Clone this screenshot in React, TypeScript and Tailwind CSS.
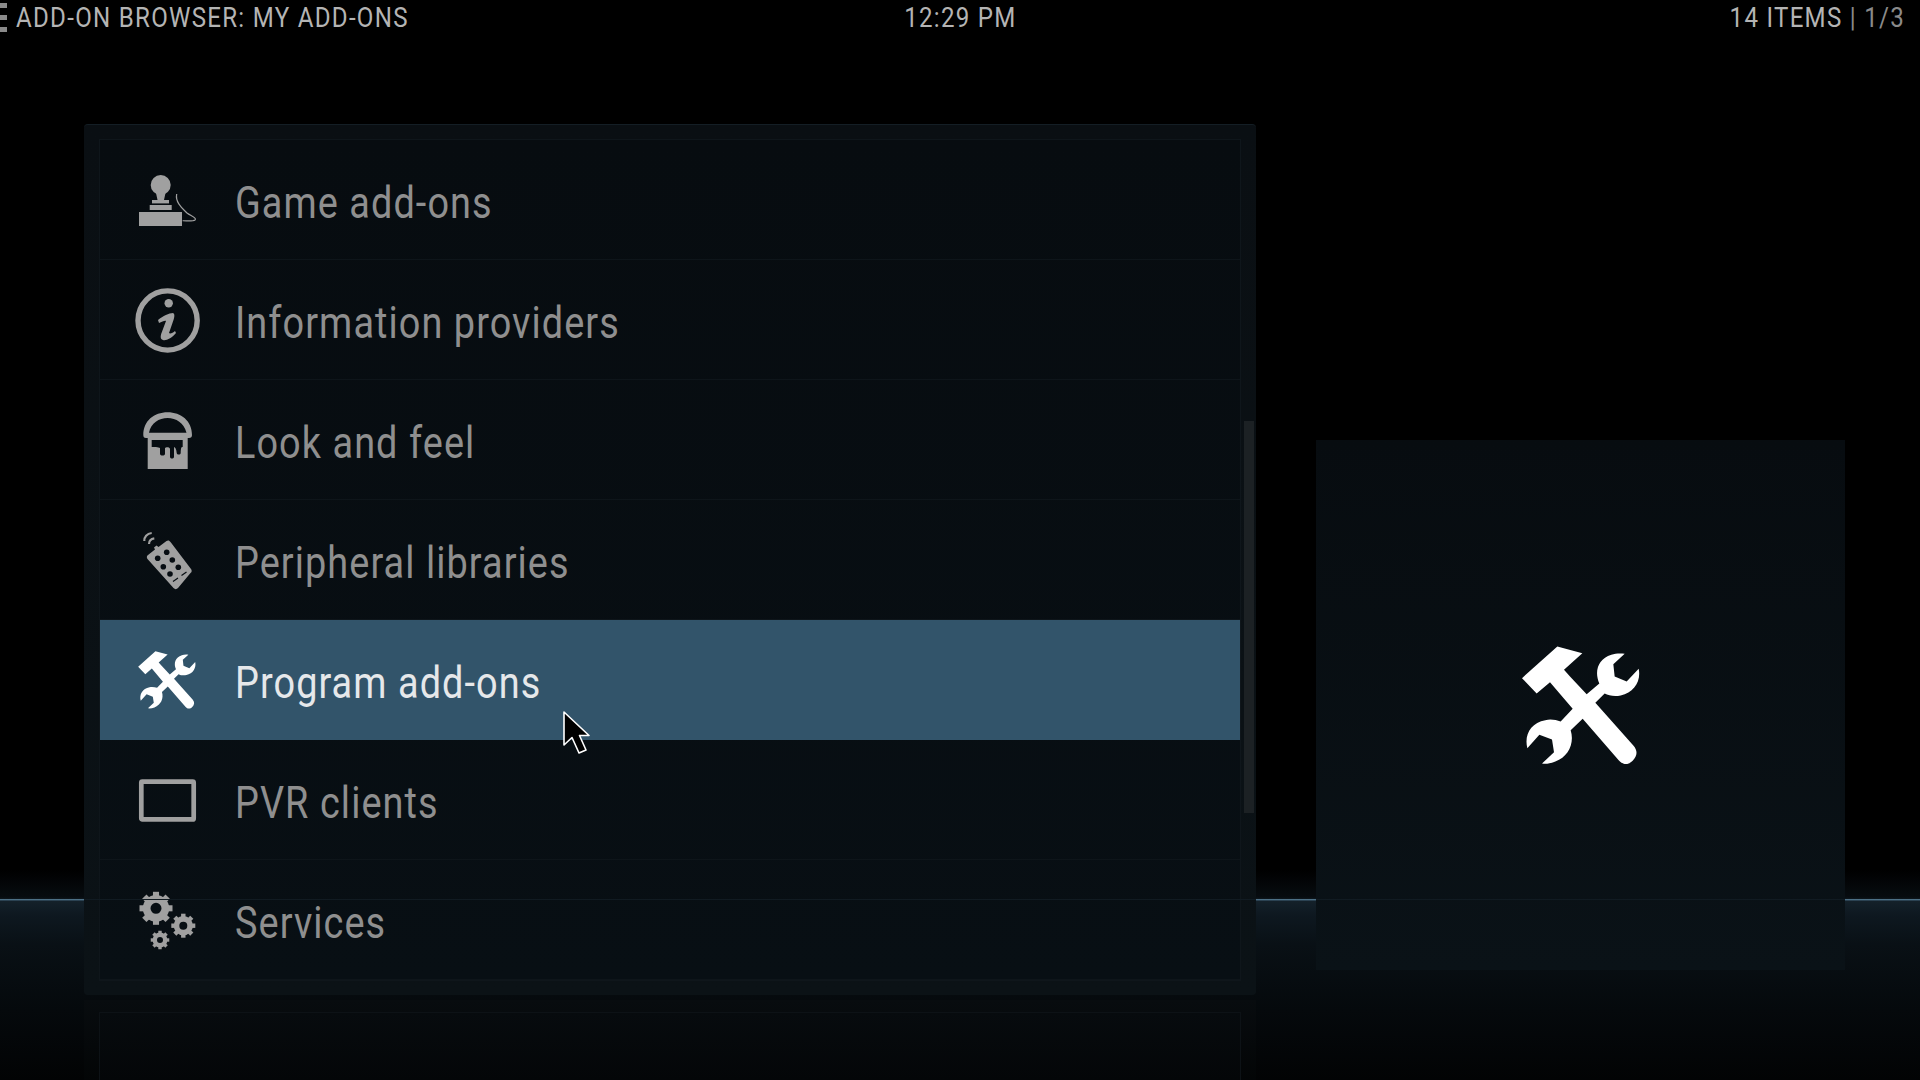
const items = ["Game add-ons", "Information providers", "Look and feel", "Peripheral libraries", "Program add-ons", "PVR clients", "Services"];

function Tools({ className }: { className: string }) {
  return (
    <svg viewBox="118 68 366 368" className={className} fill="currentColor">
      <path d="M230 75 L305 95 L250 145 L268 165 L318 218 L356 186 C340 150 352 112 392 100 C404 96 418 95 432 97 L398 128 L402 165 L438 180 L474 142 C482 178 460 214 420 222 C400 226 384 222 372 216 L344 244 L458 372 C472 388 470 404 456 418 C442 432 426 430 414 416 L306 292 L270 326 C282 364 264 406 224 420 C210 426 196 428 184 426 L220 392 L214 354 L176 340 L140 380 C130 340 150 304 194 296 C212 292 226 296 240 300 L276 262 L208 182 L168 216 L124 170 Z" />
    </svg>
  );
}

function Gear({ cx, cy, r, hole, teeth }: { cx: number; cy: number; r: number; hole: number; teeth: number }) {
  const t = [];
  for (let i = 0; i < teeth; i++) {
    t.push(<rect key={i} x={cx - r * 0.23} y={cy - r * 1.25} width={r * 0.46} height={r * 0.5} transform={`rotate(${(i * 360) / teeth} ${cx} ${cy})`} />);
  }
  return (
    <g>
      {t}
      <circle cx={cx} cy={cy} r={(r + hole) / 2} fill="none" stroke="currentColor" strokeWidth={r - hole} />
    </g>
  );
}

function ItemIcon({ index }: { index: number }) {
  const cls = "w-[60px] h-[60px] overflow-visible";
  const dark = "#070d12";
  if (index === 0)
    return (
      <svg viewBox="0 0 60 60" className={cls} fill="currentColor">
        <circle cx="23.7" cy="15" r="10" />
        <path d="M19 23 L28.5 23 L27 30 L20.5 30 Z" />
        <rect x="15" y="30" width="17" height="3.4" />
        <rect x="12.7" y="35" width="22" height="5" />
        <rect x="2" y="42" width="43" height="14" />
        <path d="M39.7 24 C38 32 45 38 50 43 C54 46 60 48 58 50 C56 51.5 50 51 45.7 50.7" fill="none" stroke="currentColor" strokeWidth="1.2" />
      </svg>
    );
  if (index === 1)
    return (
      <svg viewBox="0 0 60 60" className={cls} fill="currentColor">
        <circle cx="30.6" cy="30.5" r="29.6" fill="none" stroke="currentColor" strokeWidth="5.4" />
        <circle cx="31.7" cy="13.3" r="4.2" />
        <path d="M21 30 C26 26 32 23 36 23 C38 24 37.5 27 36.5 30 L32 43 C33 44 36 43 38 41 L39 43 C35 48 29 51 26 50 C23 49 23.5 46 24.5 43 L29 31 C28 30 25 32 22 33 Z" />
      </svg>
    );
  if (index === 2)
    return (
      <svg viewBox="0 0 60 60" className={cls} fill="currentColor">
        <path fillRule="evenodd" d="M6.3 25 C6.3 11 17 2.3 30.6 2.3 C44 2.3 55 11 55 25 C55 27 54 28 52 28 L9 28 C7 28 6.3 27 6.3 25 Z M12 22.7 L49.5 22.7 C47 13 39 8 30.6 8 C22 8 14 13 12 22.7 Z" />
        <rect x="10.7" y="27" width="40" height="32" />
        <path fill={dark} d="M14.7 30 L45.7 30 L45.7 37 C44 37 44 38 43.7 43 C43.5 45 40 45 39.7 43 C39.5 39 38 37 37 37 L37 47 C36.5 49 33.5 49 33 47 L33 39 C33 37 29 37 28 38 L28 44 C27.5 46 23.5 46 23 44 L23 38 C22 37 16 37 14.7 37 Z" />
      </svg>
    );
  if (index === 3)
    return (
      <svg viewBox="0 0 60 60" className={cls} fill="currentColor">
        <path d="M11 25 L18 19.5 L17 17.5 L19.5 15.5 L21.5 17 L29.5 11 C31 10 32.5 10.5 33.5 12 L54 39 C55 40.5 55 42 53.5 43 L41 58 C39.5 59.5 38 59.5 36.5 58 L10.5 29 C9.5 27.5 9.7 26 11 25 Z" />
        <g fill={dark}>
          <circle cx="20.7" cy="28.3" r="2.8" />
          <circle cx="29.7" cy="22.3" r="2.8" />
          <circle cx="26.3" cy="36.7" r="2.8" />
          <circle cx="35.3" cy="30" r="2.8" />
          <circle cx="33" cy="44" r="2.8" />
          <circle cx="41.3" cy="37.3" r="2.8" />
        </g>
        <path d="M36 51.5 L41 48 M44.5 45.5 L49.5 42" stroke={dark} strokeWidth="1.2" />
        <path d="M7.3 11 C7 7 10 3.5 14.7 3" fill="none" stroke="currentColor" strokeWidth="2.2" />
        <path d="M12 14 C12 11 14 8.8 17.3 8.3" fill="none" stroke="currentColor" strokeWidth="2.2" />
      </svg>
    );
  if (index === 4) return <Tools className="h-[60px] w-[60px]" />;
  if (index === 5)
    return (
      <svg viewBox="0 0 60 60" className={cls}>
        <rect x="4.3" y="11.6" width="52.4" height="37.8" fill="none" stroke="currentColor" strokeWidth="4.7" rx="1" />
      </svg>
    );
  return (
    <svg viewBox="0 0 60 60" className={cls} fill="currentColor">
      <Gear cx={19} cy={18.3} r={13.2} hole={5.5} teeth={8} />
      <Gear cx={46.3} cy={35.7} r={9.6} hole={4} teeth={8} />
      <Gear cx={23} cy={50} r={7.4} hole={3} teeth={8} />
    </svg>
  );
}

export default function App() {
  return (
    <div className="relative h-screen w-full overflow-hidden bg-black font-['Roboto','Liberation_Sans',sans-serif]">
      {/* floor glow */}
      <div className="absolute inset-x-0 top-[860px] bottom-0 bg-[linear-gradient(to_bottom,#000000_10px,#070c10_37px,#14212a_41px,#0e1820_55px,#091015_85px,#05090c_150px,#020304_220px)]" />
      <div className="absolute inset-x-0 top-[899px] h-[1px] bg-[#4d7086]" />
      <div className="absolute inset-x-0 top-[900px] h-[1px] bg-[#2b4252]" />

      <header className="relative flex h-[36px] items-start justify-between text-[#b4b4b4]">
        <div className="flex w-[700px] items-start pt-[2px]">
          <div className="mt-[1px] flex h-[29px] w-[7px] flex-col justify-between">
            <span className="h-[5px] bg-[#8a8a8a]" />
            <span className="h-[5px] bg-[#8a8a8a]" />
            <span className="h-[5px] bg-[#8a8a8a]" />
          </div>
          <span className="ml-[9px] origin-left scale-x-[0.86] whitespace-nowrap text-[28px] leading-[32px] tracking-[1.5px]">ADD-ON BROWSER: MY ADD-ONS</span>
        </div>
        <span className="scale-x-[0.86] whitespace-nowrap pt-[2px] text-[28px] leading-[32px] tracking-[1.5px]">12:29 PM</span>
        <div className="flex w-[700px] justify-end pr-[15px] pt-[2px]">
          <span className="origin-right scale-x-[0.86] whitespace-nowrap text-[28px] leading-[32px] tracking-[1.5px]">
            14 ITEMS <span className="text-[#8a8a8a]">| 1/3</span>
          </span>
        </div>
      </header>

      <main className="relative flex items-start pl-[84px] pt-[88px]">
        <section className="relative h-[871px] w-[1172px] rounded-[4px] border-t border-[#141e25] bg-[linear-gradient(to_bottom,#0a0f13,#0b1216)] pl-[15px] pr-[15px] pt-[14px]">
          <ul className="h-[842px] border border-[#0f161b] bg-[linear-gradient(to_bottom,#070c10,#080f14)]">
            {items.map((label, i) => (
              <li key={label} className={i === 4 ? "flex h-[120px] items-center bg-[#32546a] text-white" : "flex h-[120px] items-center border-b border-[#0e151a] text-[#a0a0a0]"}>
                <span className="flex w-[134px] justify-center"><ItemIcon index={i} /></span>
                <span className={i === 4 ? "ml-[1px] mt-[5px] origin-left scale-x-[0.86] whitespace-nowrap text-[44px] tracking-[1.25px] text-[#e6e8ea]" : "ml-[1px] mt-[6px] origin-left scale-x-[0.86] whitespace-nowrap text-[44px] tracking-[1.25px] text-[#8f8f8f]"}>{label}</span>
              </li>
            ))}
          </ul>
          <div className="absolute left-[1160px] top-[296px] h-[392px] w-[10px] bg-[#1c2124]" />
        </section>

        <aside className="ml-[60px] mt-[316px] flex h-[530px] w-[529px] items-center justify-center bg-[linear-gradient(to_bottom,#070c10,#0a1217)] text-white">
          <Tools className="h-[123px] w-[122px]" />
        </aside>
      </main>

      {/* reflection of the list */}
      <div className="absolute left-[84px] top-[1000px] h-[80px] w-[1172px] bg-[linear-gradient(to_bottom,#080c0f,#030506)] pl-[15px] pr-[15px] pt-[12px]">
        <div className="h-full border-x border-t border-[#0d1216] bg-[linear-gradient(to_bottom,#070b0e,#040608)]" />
      </div>

      {/* horizon seen through the panels */}
      <div className="absolute left-[84px] top-[899px] h-[1px] w-[1172px] bg-[#111b22]" />
      <div className="absolute left-[1316px] top-[899px] h-[1px] w-[529px] bg-[#111b22]" />

      {/* mouse pointer */}
      <svg viewBox="0 0 30 50" className="absolute left-[561px] top-[708px] h-[50px] w-[30px]">
        <path d="M3 4 L3 37 L11 29.5 L18 45 L25 42 L18.5 27.5 L28 27.5 Z" fill="#000" stroke="#fff" strokeWidth="1.6" strokeLinejoin="round" />
      </svg>
    </div>
  );
}
